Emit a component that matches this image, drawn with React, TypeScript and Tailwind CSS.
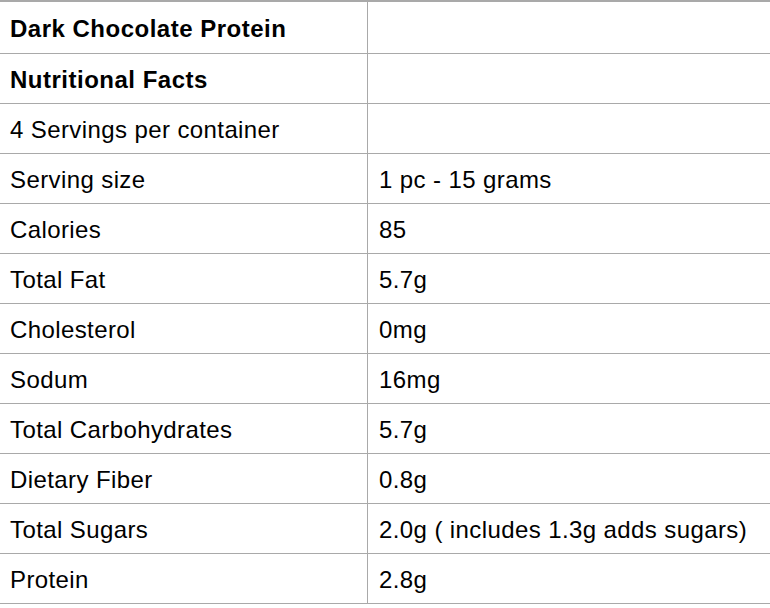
const rows: [string, string, boolean?][] = [
  ["Dark Chocolate Protein", "", true],
  ["Nutritional Facts", "", true],
  ["4 Servings per container", ""],
  ["Serving size", "1 pc - 15 grams"],
  ["Calories", "85"],
  ["Total Fat", "5.7g"],
  ["Cholesterol", "0mg"],
  ["Sodum", "16mg"],
  ["Total Carbohydrates", "5.7g"],
  ["Dietary Fiber", "0.8g"],
  ["Total Sugars", "2.0g ( includes 1.3g adds sugars)"],
  ["Protein", "2.8g"],
];

export default function App() {
  return (
    <div className="w-[770px] h-[608px] overflow-hidden bg-white text-black font-['Liberation_Sans',Arial,sans-serif] text-[24px] tracking-[0.4px]">
      <div className="border-t-2 border-[#a9a9a9]">
        {rows.map(([label, value, bold], i) => (
          <div
            key={i}
            className={`grid grid-cols-[368px_1fr] border-b border-[#a9a9a9] ${i === 0 ? "h-[52px]" : "h-[50px]"}`}
          >
            <div className={`flex items-center pl-[10px] pt-[2px] border-r border-[#a9a9a9] ${bold ? "font-bold tracking-[0.5px]" : ""}`}>
              {label}
            </div>
            <div className="flex items-center pl-[11px] pt-[2px]">{value}</div>
          </div>
        ))}
      </div>
    </div>
  );
}
